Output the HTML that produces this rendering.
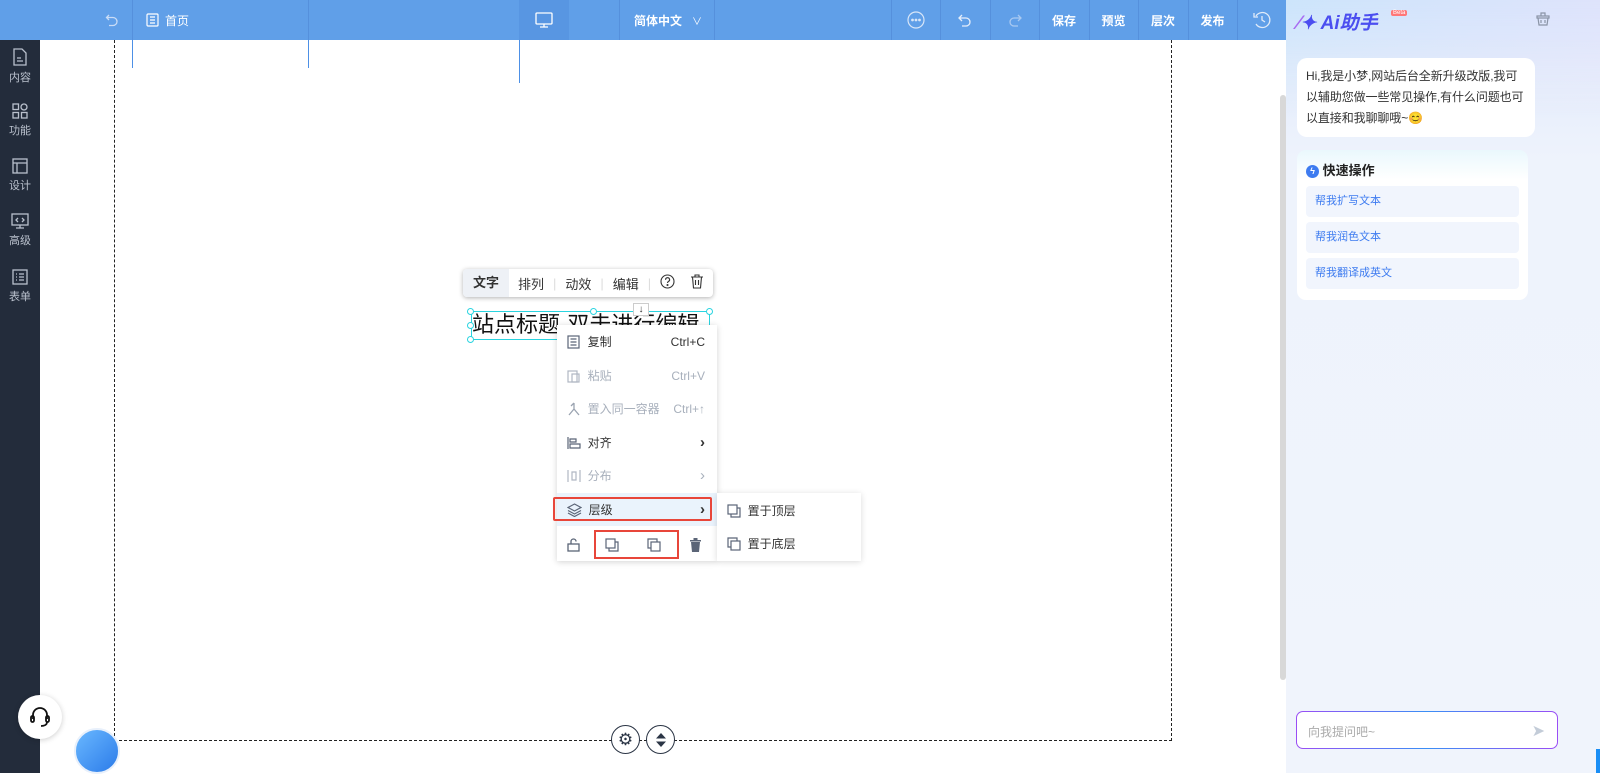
<!DOCTYPE html>
<html><head><meta charset="utf-8"><style>
*{margin:0;padding:0;box-sizing:border-box}
body{width:1600px;height:773px;overflow:hidden;position:relative;background:#fff;font-family:"Liberation Sans","Noto Sans CJK SC",sans-serif;font-size:12px;color:#333}
.a{position:absolute}
.top{left:0;top:0;width:1286px;height:40px;background:#609fe8}
.tb{position:absolute;top:0;height:40px;color:#fff;font-size:12px;font-weight:bold;display:flex;align-items:center;justify-content:center}
.dv{position:absolute;top:0;width:1px;height:40px;background:#5590dc}
.side{left:0;top:40px;width:40px;height:733px;background:#232c3b}
.si{position:absolute;left:0;width:40px;text-align:center;color:#b9c0cc;font-size:11px}
.mi{position:absolute;left:0;width:160px;height:33px;display:flex;align-items:center;padding-left:10px;font-size:12px;color:#333}
.mi .k{position:absolute;right:12px;font-size:12px}
.q{position:absolute;left:9px;width:213px;height:31px;background:#f1f5fd;border-radius:4px;color:#3d7bf0;font-size:11px;padding-left:9px;line-height:31px}
</style></head><body>
<div class="a top">
 <div class="tb" style="left:100px;width:24px"><svg width="14" height="14" viewBox="0 0 14 14" fill="none" stroke="#c9dcf6" stroke-width="1.3"><path d="M4 2L1.5 4.5 4 7M1.5 4.5H8a4 4 0 010 8H4"/></svg></div>
 <div class="dv" style="left:132px"></div>
 <div class="tb" style="left:146px;width:50px;justify-content:flex-start"><svg width="13" height="14" viewBox="0 0 13 14" fill="none" stroke="#fff" stroke-width="1.2"><rect x="1" y="1" width="11" height="12" rx="1"/><path d="M4 4h5M4 7h5M4 10h5"/></svg><span style="margin-left:6px;font-weight:normal">首页</span></div>
 <div class="dv" style="left:308px"></div>
 <div class="a" style="left:519px;top:0;width:50px;height:40px;background:#5896e2"></div>
 <div class="tb" style="left:519px;width:50px"><svg width="18" height="16" viewBox="0 0 18 16" fill="none" stroke="#fff" stroke-width="1.3"><rect x="1" y="1" width="16" height="11" rx="1"/><path d="M9 12v3M5 15h8"/></svg></div>
 <div class="dv" style="left:619px"></div>
 <div class="tb" style="left:622px;width:92px">简体中文<span style="margin-left:10px;font-weight:normal;font-size:10px">∨</span></div>
 <div class="dv" style="left:714px"></div>
 <div class="dv" style="left:891px"></div>
 <div class="tb" style="left:891px;width:49px"><svg width="18" height="18" viewBox="0 0 18 18" fill="none" stroke="#d8e6f8" stroke-width="1.2"><circle cx="9" cy="9" r="8"/><circle cx="5.5" cy="9" r=".8" fill="#fff"/><circle cx="9" cy="9" r=".8" fill="#fff"/><circle cx="12.5" cy="9" r=".8" fill="#fff"/></svg></div>
 <div class="dv" style="left:940px"></div>
 <div class="tb" style="left:940px;width:50px"><svg width="16" height="14" viewBox="0 0 16 14" fill="none" stroke="#e6eefa" stroke-width="1.3"><path d="M5 2L2 5l3 3M2 5h7a4 4 0 010 8H5"/></svg></div>
 <div class="dv" style="left:990px"></div>
 <div class="tb" style="left:990px;width:49px"><svg width="16" height="14" viewBox="0 0 16 14" fill="none" stroke="#a9c9f1" stroke-width="1.3"><path d="M11 2l3 3-3 3M14 5H7a4 4 0 000 8h4"/></svg></div>
 <div class="dv" style="left:1039px"></div>
 <div class="tb" style="left:1039px;width:50px">保存</div>
 <div class="dv" style="left:1089px"></div>
 <div class="tb" style="left:1089px;width:49px">预览</div>
 <div class="dv" style="left:1138px"></div>
 <div class="tb" style="left:1138px;width:50px">层次</div>
 <div class="dv" style="left:1188px"></div>
 <div class="tb" style="left:1188px;width:49px">发布</div>
 <div class="dv" style="left:1237px"></div>
 <div class="tb" style="left:1237px;width:49px"><svg width="18" height="18" viewBox="0 0 18 18" fill="none" stroke="#e0ebf9" stroke-width="1.3"><path d="M3 5A7.5 7.5 0 113 13"/><path d="M1 2v4h4M9 5v4l3 2"/></svg></div>
</div>
<div class="a side">
 <div class="si" style="top:8px"><svg width="16" height="18" viewBox="0 0 16 18" fill="none" stroke="#b9c0cc" stroke-width="1.3"><path d="M2 1h8l4 4v12H2z"/><path d="M5 10h4M5 13h6"/></svg><div>内容</div></div>
 <div class="si" style="top:63px"><svg width="16" height="16" viewBox="0 0 16 16" fill="none" stroke="#b9c0cc" stroke-width="1.3"><rect x="1" y="1" width="5.5" height="5.5"/><circle cx="12" cy="4" r="3"/><rect x="1" y="9.5" width="5.5" height="5.5"/><rect x="9.5" y="9.5" width="5.5" height="5.5"/></svg><div>功能</div></div>
 <div class="si" style="top:118px"><svg width="16" height="16" viewBox="0 0 16 16" fill="none" stroke="#b9c0cc" stroke-width="1.3"><rect x="1" y="1" width="14" height="14"/><path d="M1 5h14M5 5v10"/></svg><div>设计</div></div>
 <div class="si" style="top:173px"><svg width="18" height="16" viewBox="0 0 18 16" fill="none" stroke="#b9c0cc" stroke-width="1.3"><rect x="1" y="1" width="16" height="11"/><path d="M9 12v3M5 15h8M7 5L5 7l2 2M11 5l2 2-2 2"/></svg><div>高级</div></div>
 <div class="si" style="top:229px"><svg width="16" height="16" viewBox="0 0 16 16" fill="none" stroke="#b9c0cc" stroke-width="1.3"><rect x="1" y="1" width="14" height="14"/><path d="M4 5h1M7 5h5M4 8h1M7 8h5M4 11h1M7 11h5"/></svg><div>表单</div></div>
</div>
<div class="a" style="left:114px;top:40px;width:1058px;height:701px;border-left:1px dashed #222;border-right:1px dashed #222;border-bottom:1px dashed #222"></div>
<div class="a" style="left:132px;top:40px;width:1px;height:28px;background:#4d90e6"></div>
<div class="a" style="left:308px;top:40px;width:1px;height:28px;background:#4d90e6"></div>
<div class="a" style="left:519px;top:40px;width:1px;height:43px;background:#4d90e6"></div>
<div class="a" style="left:1280px;top:95px;width:6px;height:585px;background:#d8d8d8;border-radius:3px"></div>
<div class="a" style="left:463px;top:269px;width:250px;height:28px;background:#fff;border-radius:4px;box-shadow:0 1px 5px rgba(0,0,0,.3);display:flex;align-items:center;font-size:13px">
 <div style="width:46px;height:28px;line-height:28px;text-align:center;background:#eef1f6;font-weight:bold;border-radius:4px 0 0 4px">文字</div>
 <div style="width:44px;text-align:center">排列</div><span style="color:#ddd">|</span>
 <div style="width:44px;text-align:center">动效</div><span style="color:#ddd">|</span>
 <div style="width:44px;text-align:center">编辑</div><span style="color:#ddd">|</span>
 <div style="width:32px;text-align:center"><svg width="15" height="15" viewBox="0 0 15 15" fill="none" stroke="#333" stroke-width="1.1"><circle cx="7.5" cy="7.5" r="6.5"/><path d="M5.6 5.8a2 2 0 113 1.6c-.8.4-1.1.8-1.1 1.6"/><circle cx="7.5" cy="11" r=".5" fill="#333"/></svg></div>
 <div style="width:28px;text-align:center"><svg width="14" height="15" viewBox="0 0 14 15" fill="none" stroke="#333" stroke-width="1.1"><path d="M1 3h12M5 3V1h4v2M2.5 3l1 11h7l1-11M5.5 6v5M8.5 6v5"/></svg></div>
</div>
<div class="a" style="left:471px;top:311px;width:239px;height:29px;border:1px solid #2ad4e0"></div>
<div class="a" style="left:472px;top:307px;font-size:22px;color:#111;white-space:nowrap">站点标题-双击进行编辑</div>
<div class="a" style="left:633px;top:303px;width:16px;height:13px;background:#fff;border:1px solid #ccc;font-size:10px;text-align:center;line-height:11px">↓</div>
<div class="a" style="left:467px;top:308px;width:7px;height:7px;border:1px solid #2ad4e0;border-radius:50%;background:#fff"></div>
<div class="a" style="left:590px;top:308px;width:7px;height:7px;border:1px solid #2ad4e0;border-radius:50%;background:#fff"></div>
<div class="a" style="left:706px;top:308px;width:7px;height:7px;border:1px solid #2ad4e0;border-radius:50%;background:#fff"></div>
<div class="a" style="left:467px;top:322px;width:7px;height:7px;border:1px solid #2ad4e0;border-radius:50%;background:#fff"></div>
<div class="a" style="left:467px;top:336px;width:7px;height:7px;border:1px solid #2ad4e0;border-radius:50%;background:#fff"></div>
<div class="a" style="left:557px;top:325px;width:160px;height:236px;background:#fff;box-shadow:0 1px 6px rgba(0,0,0,.18)">
 <div class="mi" style="top:0"><svg width="14" height="14" viewBox="0 0 14 14" fill="none" stroke="#5b6577" stroke-width="1.2"><rect x="1" y="1" width="11" height="12"/><path d="M3.5 4h6M3.5 7h6M3.5 10h6"/></svg>&nbsp; 复制<span class="k">Ctrl+C</span></div>
 <div class="mi" style="top:34px;color:#a8b0bc"><svg width="14" height="14" viewBox="0 0 14 14" fill="none" stroke="#b0b7c3" stroke-width="1.2"><rect x="1" y="2" width="9" height="11"/><rect x="5" y="5" width="7" height="8"/></svg>&nbsp; 粘贴<span class="k">Ctrl+V</span></div>
 <div class="mi" style="top:67px;color:#a8b0bc"><svg width="14" height="14" viewBox="0 0 14 14" fill="none" stroke="#9aa3b0" stroke-width="1.3"><path d="M7 1v6M4 4l3-3M7 7l-5 6M7 7l5 6"/></svg>&nbsp; 置入同一容器<span class="k">Ctrl+↑</span></div>
 <div class="mi" style="top:101px"><svg width="14" height="14" viewBox="0 0 14 14" fill="none" stroke="#5b6577" stroke-width="1.2"><path d="M1 1v12M3 3h6v3H3zM3 8h10v4H3z"/></svg>&nbsp; 对齐<span class="k" style="font-weight:bold;font-size:15px">›</span></div>
 <div class="mi" style="top:134px;color:#a8b0bc"><svg width="14" height="14" viewBox="0 0 14 14" fill="none" stroke="#b0b7c3" stroke-width="1.2"><path d="M1 1v12M13 1v12M5 3h4v8H5z"/></svg>&nbsp; 分布<span class="k" style="font-size:15px">›</span></div>
 <div class="mi" style="top:168px;background:#eaf3fc"><svg width="15" height="14" viewBox="0 0 15 14" fill="none" stroke="#5b6577" stroke-width="1.2"><path d="M7.5 1L14 4.5 7.5 8 1 4.5zM1 7.5L7.5 11 14 7.5M1 10L7.5 13.5 14 10"/></svg>&nbsp; 层级<span class="k" style="font-weight:bold;font-size:15px">›</span></div>
 <div class="mi" style="top:203px;color:#556">
  <svg width="14" height="14" viewBox="0 0 14 14" fill="none" stroke="#5b6577" stroke-width="1.3"><rect x="1" y="6" width="11" height="7"/><path d="M4 6V3.5a2.5 2.5 0 015 0"/></svg>
  <svg style="margin-left:24px" width="14" height="14" viewBox="0 0 14 14" fill="none" stroke="#5b6577" stroke-width="1.2"><rect x="1" y="1" width="9" height="9"/><path d="M10 4h3v9H4v-3"/></svg>
  <svg style="margin-left:28px" width="14" height="14" viewBox="0 0 14 14" fill="none" stroke="#5b6577" stroke-width="1.2"><rect x="4" y="4" width="9" height="9"/><path d="M4 10H1V1h9v3"/></svg>
  <svg style="margin-left:28px" width="13" height="14" viewBox="0 0 13 14" fill="#5b6577"><path d="M1 2h11v1.5H1zM4.5 0h4v2h-4zM2 4h9l-1 10H3z"/></svg>
 </div>
</div>
<div class="a" style="left:553px;top:497px;width:159px;height:24px;border:2px solid #e8463a;border-radius:2px"></div>
<div class="a" style="left:594px;top:530px;width:85px;height:29px;border:2px solid #e8463a"></div>
<div class="a" style="left:717px;top:493px;width:144px;height:68px;background:#fff;box-shadow:0 1px 6px rgba(0,0,0,.15)">
 <div style="position:absolute;left:10px;top:9px;font-size:12px;display:flex;align-items:center"><svg width="14" height="14" viewBox="0 0 14 14" fill="none" stroke="#5b6577" stroke-width="1.2"><rect x="1" y="1" width="9" height="9"/><path d="M10 4h3v9H4v-3"/></svg>&nbsp; 置于顶层</div>
 <div style="position:absolute;left:10px;top:42px;font-size:12px;display:flex;align-items:center"><svg width="14" height="14" viewBox="0 0 14 14" fill="none" stroke="#5b6577" stroke-width="1.2"><rect x="4" y="4" width="9" height="9"/><path d="M4 10H1V1h9v3"/></svg>&nbsp; 置于底层</div>
</div>
<div class="a" style="left:18px;top:695px;width:44px;height:44px;border-radius:50%;background:#fff;box-shadow:0 1px 6px rgba(0,0,0,.2);display:flex;align-items:center;justify-content:center"><svg width="22" height="24" viewBox="0 0 22 24" fill="none" stroke="#111" stroke-width="1.8"><path d="M4 14V10a7 7 0 0114 0v4"/><rect x="2" y="11" width="3" height="6" rx="1.5"/><rect x="17" y="11" width="3" height="6" rx="1.5"/><path d="M18 17c0 3-3 4-6 4"/></svg></div>
<div class="a" style="left:74px;top:728px;width:46px;height:46px;border-radius:50%;background:linear-gradient(135deg,#6ab8ff,#2b7be9);border:2px solid #e8f0fb"></div>
<div class="a" style="left:611px;top:725px;width:29px;height:29px;border-radius:50%;background:#fff;border:1px solid #2b3545;text-align:center;line-height:27px;font-size:17px;color:#2b3545">⚙</div>
<div class="a" style="left:646px;top:725px;width:29px;height:29px;border-radius:50%;background:#fff;border:1px solid #2b3545;display:flex;align-items:center;justify-content:center"><svg width="10" height="14" viewBox="0 0 10 14" fill="#2b3545"><path d="M5 0l5 5.5H0zM5 14l5-5.5H0z"/></svg></div>
<div class="a" style="left:1286px;top:0;width:314px;height:773px;background:linear-gradient(180deg,#d3e6fb 0,#e4ecfb 60px,#eef3fc 160px,#f0f4fc 100%)"></div>
<div class="a" style="left:1286px;top:0;width:314px;height:120px;background:linear-gradient(90deg,rgba(200,228,252,.6),rgba(230,225,252,.6));-webkit-mask:linear-gradient(#000,transparent)"></div>
<div class="a" style="left:1297px;top:8px;font-size:19px;font-weight:bold;font-style:italic;color:#4b4ef0;white-space:nowrap"><span style="color:#a86cf2">⁄</span>✦ Ai助手</div>
<div class="a" style="left:1391px;top:10px;font-size:6px;background:#f77;color:#fff;padding:0 2px;border-radius:2px">Beta</div>
<div class="a" style="left:1536px;top:12px"><svg width="14" height="14" viewBox="0 0 14 14" fill="none" stroke="#8a94a6" stroke-width="1.2"><path d="M5 1h4v3H5zM1 4h12v2H1zM2 6l1 7h8l1-7M5 8v3M9 8v3"/></svg></div>
<div class="a" style="left:1297px;top:58px;width:238px;height:79px;background:#fff;border-radius:10px;padding:8px 7px 8px 9px;font-size:12px;line-height:21px;color:#333;letter-spacing:-.1px">Hi,我是小梦,网站后台全新升级改版,我可以辅助您做一些常见操作,有什么问题也可以直接和我聊聊哦~😊</div>
<div class="a" style="left:1297px;top:150px;width:231px;height:150px;background:linear-gradient(180deg,#eaf8fd,#fff 30px);border-radius:9px">
 <div style="position:absolute;left:9px;top:10px;font-size:13px;font-weight:bold;color:#222"><span style="display:inline-block;width:13px;height:13px;border-radius:50%;background:#3d7bf0;color:#fff;font-size:9px;text-align:center;line-height:13px;vertical-align:1px">ϟ</span> 快速操作</div>
 <div class="q" style="top:36px">帮我扩写文本</div>
 <div class="q" style="top:72px">帮我润色文本</div>
 <div class="q" style="top:108px">帮我翻译成英文</div>
</div>
<div class="a" style="left:1296px;top:711px;width:262px;height:38px;border-radius:7px;background:linear-gradient(#fff,#fff) padding-box,linear-gradient(90deg,#9a4df5,#3a8ef5,#9a4df5) border-box;border:1px solid transparent;font-size:12px;color:#aaa;padding:11px 11px">向我提问吧~<span style="position:absolute;right:12px;top:9px;color:#c3ccd8;font-size:16px">➤</span></div>
<div class="a" style="left:1596px;top:749px;width:4px;height:24px;background:#1a8ef5"></div>
</body></html>
